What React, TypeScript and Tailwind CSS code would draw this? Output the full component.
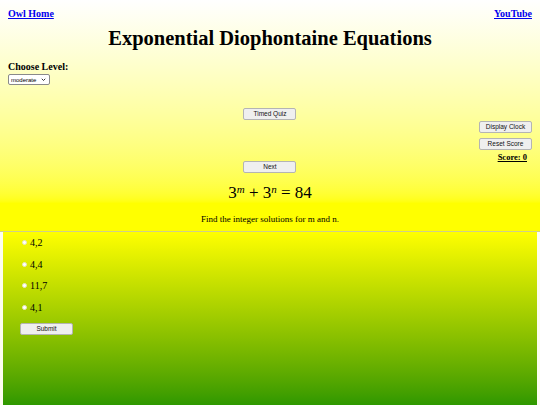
import { useState } from 'react';

const serif = "font-['Liberation_Serif','Times_New_Roman',serif]";
const btn =
  "block h-[12px] w-[53px] rounded-[2px] border border-[#b4b4b4] bg-[#efefef] font-['Liberation_Sans',Arial,sans-serif] text-[6.5px] leading-none text-[#111]";

const options = ['4,2', '4,4', '11,7', '4,1'];

export default function App() {
  const [level, setLevel] = useState('moderate');
  const [picked, setPicked] = useState('');

  return (
    <div className={`${serif} min-h-[405px] w-[540px] bg-[#fdfdf0] text-black`}>
      <div className="h-[231px] bg-gradient-to-b from-white to-[#ffff00] to-[88%] px-[8px] pt-[8px]">
        <div className="flex items-start justify-between text-[10px] font-bold leading-[12px]">
          <a href="#" className="text-[#0000ee] underline">Owl Home</a>
          <a href="#" className="text-[#0000ee] underline">YouTube</a>
        </div>
        <h1 className="mt-[5px] text-center text-[20.5px] font-bold leading-[26px]">
          Exponential Diophontaine Equations
        </h1>
        <p className="mt-[10px] text-[10px] font-bold leading-[12px]">Choose Level:</p>
        <div className="relative mt-[1px] h-[11px] w-[42px]">
          <select
            value={level}
            onChange={(e) => setLevel(e.target.value)}
            className="block h-[11px] w-[42px] appearance-none rounded-[2px] border border-[#8a8a8a] bg-white pl-[2px] font-['Liberation_Sans',Arial,sans-serif] text-[6px] leading-none"
          >
            <option value="easy">easy</option>
            <option value="moderate">moderate</option>
            <option value="hard">hard</option>
          </select>
          <svg viewBox="0 0 10 10" className="pointer-events-none absolute right-[4px] top-[3px] h-[5px] w-[5px]">
            <path d="M1.5 3.5L5 7L8.5 3.5" fill="none" stroke="#222" strokeWidth="1.8" />
          </svg>
        </div>

        <div className="grid grid-cols-[1fr_auto_1fr]">
          <div />
          <div className="flex flex-col items-center pt-[23px]">
            <button className={btn}>Timed Quiz</button>
            <button className={`${btn} mt-[41px]`}>Next</button>
            <div className="mt-[10px] text-[17px] leading-[20px]">
              3<sup className="text-[11px] italic">m</sup> + 3<sup className="text-[11px] italic">n</sup> = 84
            </div>
            <p className="mt-[11px] text-[9px] leading-[11px] whitespace-nowrap">
              Find the integer solutions for m and n.
            </p>
          </div>
          <div className="flex flex-col items-end pt-[36px]">
            <button className={btn}>Display Clock</button>
            <button className={`${btn} mt-[5px]`}>Reset Score</button>
            <span className="mt-[2px] mr-[5px] text-[8.5px] font-bold leading-[11px] underline">Score: 0</span>
          </div>
        </div>
      </div>

      <div className="h-px bg-[#cfcf8a]" />

      <div className="mx-[3px] h-[173px] bg-gradient-to-b from-[#ffff00] to-[#2e9800] px-[17px] pt-0">
        {options.map((o) => (
          <label key={o} className="flex h-[21.5px] items-center text-[10px]">
            <input
              type="radio"
              name="ans"
              checked={picked === o}
              onChange={() => setPicked(o)}
              className="m-0 ml-[2px] mr-[3px] h-[5px] w-[5px] appearance-none rounded-full border border-[#e6e6c0] bg-white checked:bg-[#0060df]"
            />
            {o}
          </label>
        ))}
        <button className={`${btn} mt-[5px] w-[52px]`}>Submit</button>
      </div>
    </div>
  );
}
